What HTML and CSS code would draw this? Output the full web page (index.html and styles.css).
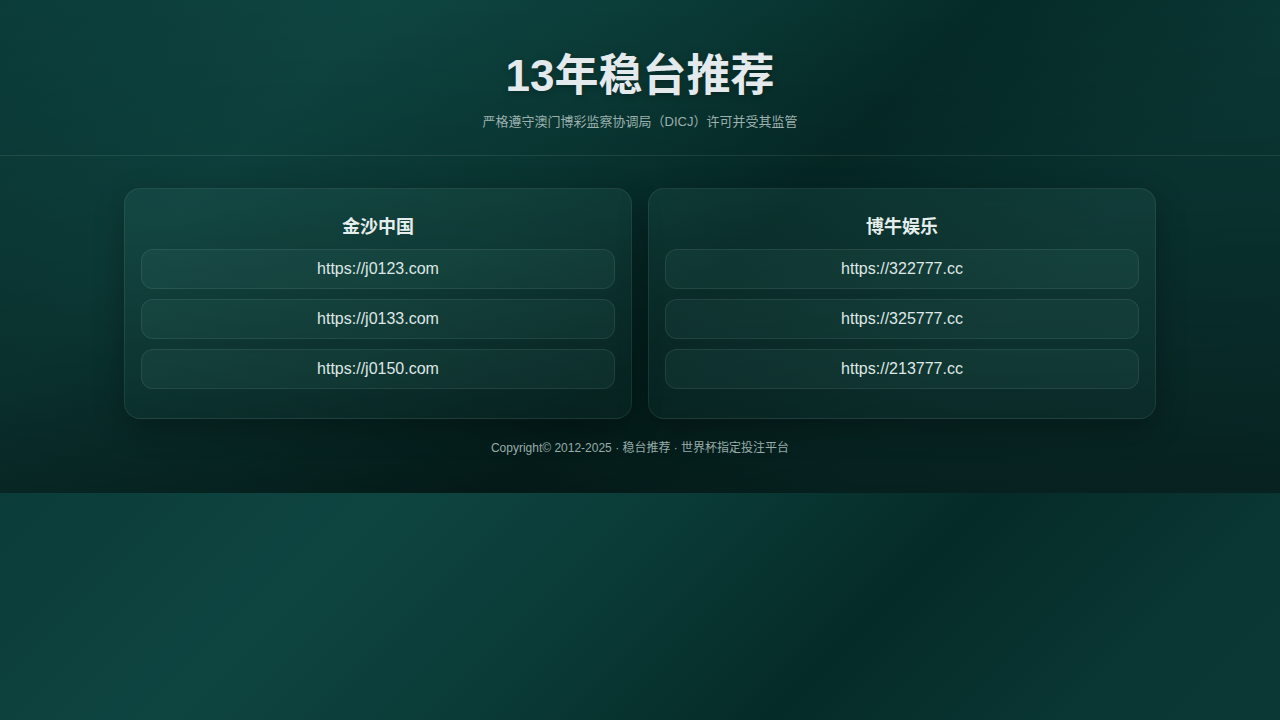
FILE: index.html
```html
<!DOCTYPE html>
<html lang="zh-CN">
<head>
<meta charset="utf-8">
<title>13年稳台推荐</title>
<link rel="stylesheet" href="styles.css">
</head>
<body>
<div class="page">
  <header class="header">
    <h1 class="title">13年稳台推荐</h1>
    <p class="subtitle">严格遵守澳门博彩监察协调局（DICJ）许可并受其监管</p>
  </header>
  <main class="main">
    <div class="grid">
      <section class="card">
        <h3 class="card-title">金沙中国</h3>
        <div class="links">
          <a class="link" href="#">https://j0123.com</a>
          <a class="link" href="#">https://j0133.com</a>
          <a class="link" href="#">https://j0150.com</a>
        </div>
      </section>
      <section class="card">
        <h3 class="card-title">博牛娱乐</h3>
        <div class="links">
          <a class="link" href="#">https://322777.cc</a>
          <a class="link" href="#">https://325777.cc</a>
          <a class="link" href="#">https://213777.cc</a>
        </div>
      </section>
    </div>
  </main>
  <footer class="footer">Copyright© 2012-2025 · 稳台推荐 · 世界杯指定投注平台</footer>
</div>
</body>
</html>
```
FILE: styles.css
```css
html {
  background: linear-gradient(135deg, #0b3c39 0%, #0e4541 22%, #0a3a36 40%, #052b28 56%, #0a3734 75%, #0b3a37 100%);
  background-size: 100% 493px;
  background-repeat: repeat;
}

body {
  margin: 0;
  font-family: "Liberation Sans", "Noto Sans CJK SC", sans-serif;
  color: #e6eeec;
}

.page {
  background: linear-gradient(180deg, rgba(0, 0, 0, 0) 0%, rgba(0, 0, 0, 0.12) 40%, rgba(0, 0, 0, 0.42) 100%);
}

.header {
  text-align: center;
  padding: 49px 16px 23px;
  border-bottom: 1px solid rgba(255, 255, 255, 0.09);
}

.title {
  margin: 0;
  font-size: 44px;
  line-height: 54px;
  font-weight: 700;
  color: #e4eaeb;
  text-shadow: 0 2px 6px rgba(0, 0, 0, 0.25);
}

.subtitle {
  margin: 9px 0 0;
  font-size: 13px;
  line-height: 20px;
  color: #9cb0ad;
}

.main {
  padding: 32px 0 0;
}

.grid {
  width: 1032px;
  margin: 0 auto;
  display: grid;
  grid-template-columns: 1fr 1fr;
  gap: 16px;
}

.card {
  padding: 25px 16px 29px;
  border: 1px solid rgba(255, 255, 255, 0.08);
  border-radius: 16px;
  background: linear-gradient(180deg, rgba(120, 220, 200, 0.07), rgba(120, 220, 200, 0.035));
  box-shadow: 0 10px 30px rgba(0, 0, 0, 0.28);
}

.card-title {
  margin: 0 0 8px;
  text-align: center;
  font-size: 18px;
  line-height: 27px;
  font-weight: 700;
  color: #e6eeec;
}

.links {
  display: flex;
  flex-direction: column;
  gap: 10px;
}

.link {
  display: block;
  height: 38px;
  line-height: 38px;
  text-align: center;
  font-size: 16px;
  color: #dfe8e6;
  text-decoration: none;
  border: 1px solid rgba(255, 255, 255, 0.08);
  border-radius: 12px;
  background: rgba(140, 230, 215, 0.05);
}

.footer {
  padding: 20px 0 36px;
  text-align: center;
  font-size: 12px;
  line-height: 18px;
  color: #98aca8;
}
```
